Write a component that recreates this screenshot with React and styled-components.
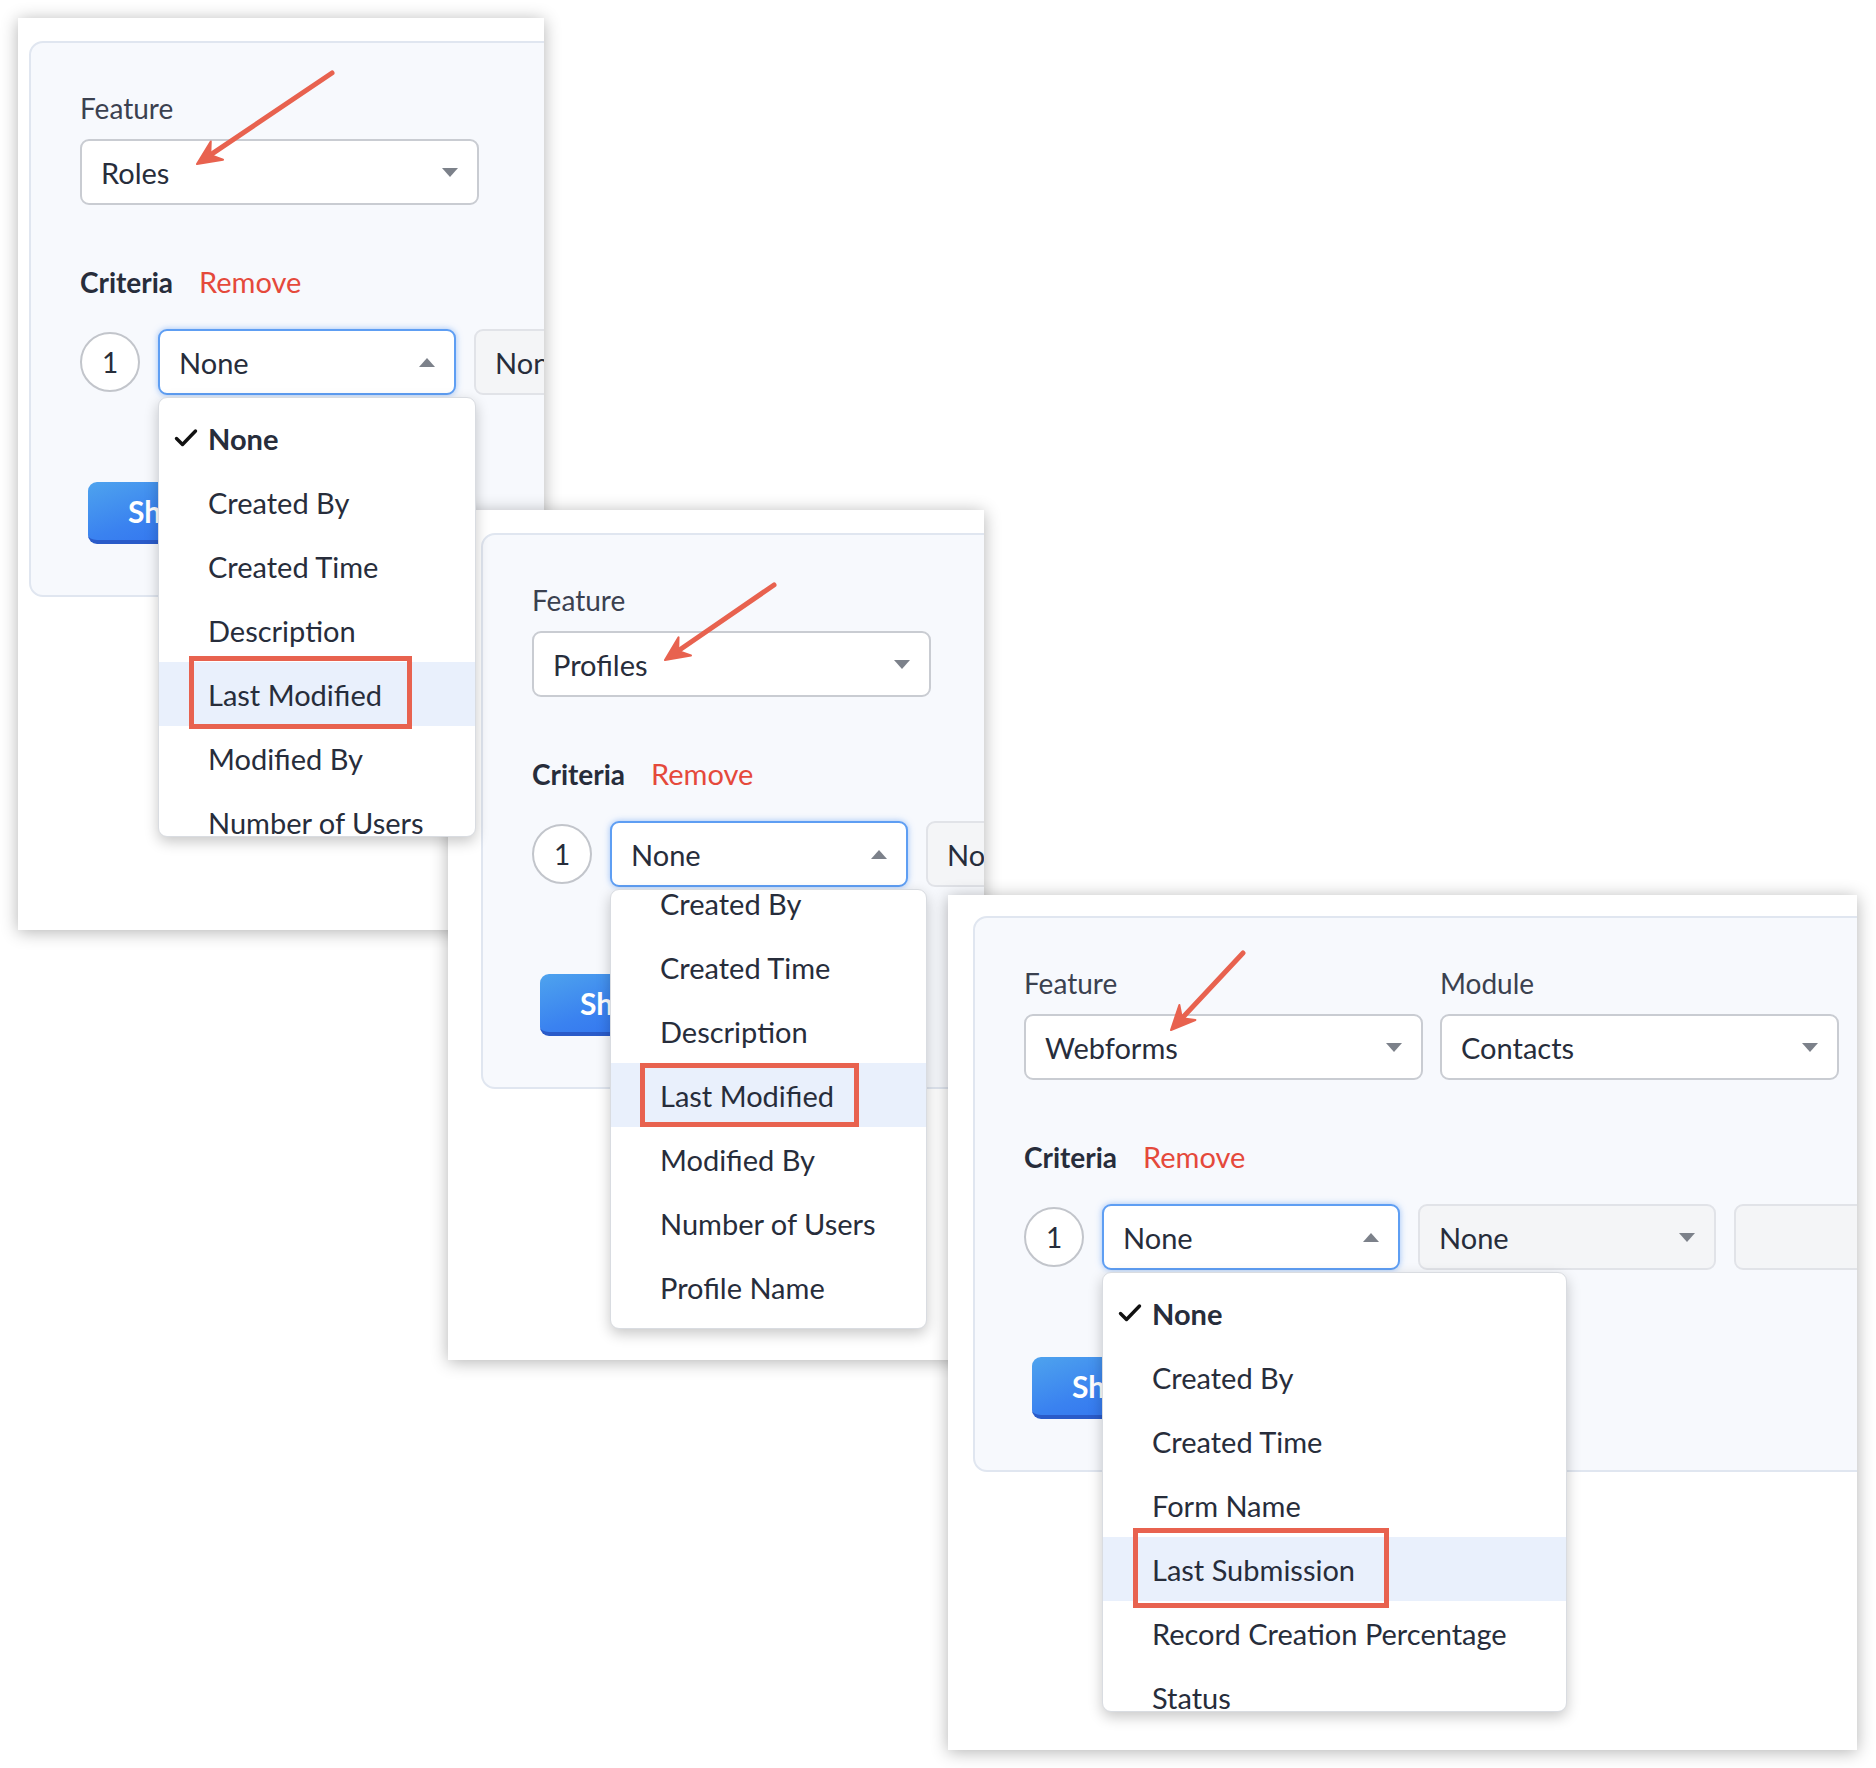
import React from 'react'
import styled, {createGlobalStyle, css} from 'styled-components'

const GlobalStyle = createGlobalStyle`
    html, body {
        margin: 0;
        padding: 0;
        background: #fff;
    }
    body {
        font-family: Lato, "Open Sans", sans-serif;
        color: #262c3a;
    }
`

const ink = '#272d3b'
const coral = '#e8624f'

// the picture is three screenshots stacked on a blank sheet
const Stage = styled.div`
    position: relative;
    width: 1876px;
    height: 1768px;
    overflow: hidden;
    background: #fff;
`

const Shot = styled.section`
    position: absolute;
    left: ${p => p.$x}px;
    top: ${p => p.$y}px;
    width: ${p => p.$w}px;
    height: ${p => p.$h}px;
    padding: ${p => p.$pt}px 0 0 ${p => p.$pl}px;
    box-sizing: border-box;
    background: #fff;
    overflow: hidden;
    box-shadow: 0 2px 16px rgba(0, 0, 0, .3);
`

const Panel = styled.div`
    width: 1100px;
    height: 556px;
    box-sizing: border-box;
    padding: 48px 0 0 49px;
    display: flex;
    flex-direction: column;
    align-items: flex-start;
    background: #f7f9fd;
    border: 2px solid #e0e6f0;
    border-radius: 14px;
`

const Fields = styled.div`
    display: flex;
    gap: 17px;
`

const Field = styled.div`
    display: flex;
    flex-direction: column;
    gap: 14px;
`

const Label = styled.div`
    font-size: 28px;
    line-height: 34px;
    color: #3b4150;
`

const CriteriaHead = styled.div`
    margin-top: 60px;
    display: flex;
    gap: 26px;
    font-size: 28px;
    line-height: 34px;
`

const Heading = styled.span`
    font-weight: 700;
    color: ${ink};
`

const Remove = styled.span`
    color: #e5493b;
    font-size: 29px;
`

const Row = styled.div`
    margin-top: 30px;
    display: flex;
    align-items: center;
    gap: 18px;
`

const Step = styled.div`
    flex: none;
    width: 60px;
    height: 60px;
    box-sizing: border-box;
    display: flex;
    align-items: center;
    justify-content: center;
    border: 2px solid #c2c5cb;
    border-radius: 50%;
    background: #fff;
    font-size: 28px;
    color: ${ink};
`

const SelectWrap = styled.div`
    position: relative;
    flex: none;
`

const Select = styled.div`
    box-sizing: border-box;
    width: ${p => p.$w}px;
    height: 66px;
    display: flex;
    align-items: center;
    justify-content: space-between;
    padding: 0 19px 0 19px;
    border-radius: 9px;
    font-size: 29px;
    color: ${ink};
    background: ${p => p.$muted ? '#f4f5f7' : '#fff'};
    border: 2px solid ${p => p.$focus ? '#5e9ef3' : p.$muted ? '#e1e3e8' : '#c9ccd2'};
    ${p => p.$focus && css`
        box-shadow: 0 0 6px rgba(80, 145, 240, .55);
    `}
`

const Caret = styled.span`
    width: 0;
    height: 0;
    border-left: 8.5px solid transparent;
    border-right: 8.5px solid transparent;
    ${p => p.$up
        ? css`border-bottom: 9px solid #7c818a;`
        : css`border-top: 9px solid #7c818a;`}
`

const Menu = styled.div`
    position: absolute;
    top: calc(100% + 2px);
    left: 0;
    z-index: 5;
    width: ${p => p.$w}px;
    height: 440px;
    box-sizing: border-box;
    overflow: hidden;
    background: #fff;
    border: 1px solid #d9dce1;
    border-radius: 9px;
    box-shadow: 0 5px 14px rgba(0, 0, 0, .22);
`

const MenuList = styled.ul`
    list-style: none;
    margin: ${p => -p.$scroll}px 0 0;
    padding: 8px 0;
`

const Item = styled.li`
    position: relative;
    height: 64px;
    display: flex;
    align-items: center;
    padding-left: 49px;
    font-size: 29px;
    white-space: nowrap;
    color: ${ink};
    font-weight: ${p => p.$checked ? 700 : 400};
    background: ${p => p.$hl ? '#e9f0fc' : 'transparent'};
`

const Tick = styled.svg`
    position: absolute;
    left: 15px;
    top: 22px;
`

// the red frame drawn over the screenshot
const Mark = styled.span`
    position: absolute;
    left: ${p => p.$l}px;
    top: ${p => p.$t}px;
    width: ${p => p.$w}px;
    height: ${p => p.$h}px;
    box-sizing: border-box;
    border: 5.5px solid ${coral};
`

const ShowButton = styled.button`
    margin: 87px 0 0 8px;
    height: 62px;
    padding: 0 44px 0 40px;
    border: none;
    border-bottom: 4px solid #2a5bc9;
    border-radius: 9px;
    background: linear-gradient(160deg, #4ea3ee 0%, #3a82f0 50%, #2f6eee 100%);
    color: #fff;
    font-family: Lato, sans-serif;
    font-size: 30px;
    font-weight: 700;
`

const Overlay = styled.svg`
    position: absolute;
    left: 0;
    top: 0;
    pointer-events: none;
    z-index: 10;
`

const Arrow = ({from, to, w, h}) => {
    const dx = to[0] - from[0]
    const dy = to[1] - from[1]
    const len = Math.hypot(dx, dy)
    const ux = dx / len
    const uy = dy / len
    const px = -uy
    const py = ux
    const back = (d, s) => [to[0] - ux * d + px * s, to[1] - uy * d + py * s]
    const head = [to, back(24, 11), back(16, 0), back(24, -11)]
    const end = back(14, 0)
    return (
        <Overlay width={w} height={h}>
            <line x1={from[0]} y1={from[1]} x2={end[0]} y2={end[1]}
                  stroke={coral} strokeWidth="5" strokeLinecap="round"/>
            <polygon points={head.map(p => p.join(',')).join(' ')}
                     fill={coral} stroke={coral} strokeWidth="2" strokeLinejoin="round"/>
        </Overlay>
    )
}

const CriteriaPicker = ({menuWidth, items, scroll = 0, checked, marked, mark}) => (
    <SelectWrap>
        <Select $w={298} $focus>
            None
            <Caret $up/>
        </Select>
        <Menu $w={menuWidth}>
            <MenuList $scroll={scroll}>
                {items.map(label => (
                    <Item key={label} $checked={label === checked} $hl={label === marked}>
                        {label === checked && (
                            <Tick width="24" height="20" viewBox="0 0 24 20">
                                <path d="M2.5 10.5 L8.5 16.5 L21.5 3" fill="none"
                                      stroke="#111" strokeWidth="3.4" strokeLinecap="round"
                                      strokeLinejoin="round"/>
                            </Tick>
                        )}
                        {label}
                        {label === marked && <Mark $l={mark[0]} $t={mark[1]} $w={mark[2]} $h={mark[3]}/>}
                    </Item>
                ))}
            </MenuList>
        </Menu>
    </SelectWrap>
)

const Screen = ({shot, fields, extra, picker, arrow}) => (
    <Shot $x={shot.x} $y={shot.y} $w={shot.w} $h={shot.h} $pl={shot.pl} $pt={shot.pt}>
        <Panel>
            <Fields>
                {fields.map(f => (
                    <Field key={f.label}>
                        <Label>{f.label}</Label>
                        <Select $w={399}>
                            {f.value}
                            <Caret/>
                        </Select>
                    </Field>
                ))}
            </Fields>
            <CriteriaHead>
                <Heading>Criteria</Heading>
                <Remove>Remove</Remove>
            </CriteriaHead>
            <Row>
                <Step>1</Step>
                <CriteriaPicker {...picker}/>
                <Select $w={298} $muted>
                    None
                    <Caret/>
                </Select>
                {extra && <Select $w={298} $muted/>}
            </Row>
            <ShowButton>Show</ShowButton>
        </Panel>
        <Arrow from={arrow.from} to={arrow.to} w={shot.w} h={shot.h}/>
    </Shot>
)

const roleItems = ['None', 'Created By', 'Created Time', 'Description', 'Last Modified',
    'Modified By', 'Number of Users']

const profileItems = ['None', 'Created By', 'Created Time', 'Description', 'Last Modified',
    'Modified By', 'Number of Users', 'Profile Name']

const webformItems = ['None', 'Created By', 'Created Time', 'Form Name', 'Last Submission',
    'Record Creation Percentage', 'Status']

const App = () => (
    <Stage>
        <GlobalStyle/>
        <Screen
            shot={{x: 18, y: 18, w: 526, h: 912, pl: 11, pt: 23}}
            fields={[{label: 'Feature', value: 'Roles'}]}
            picker={{menuWidth: 318, items: roleItems, checked: 'None',
                marked: 'Last Modified', mark: [30, -6, 223, 73]}}
            arrow={{from: [314, 55], to: [179, 146]}}
        />
        <Screen
            shot={{x: 448, y: 510, w: 536, h: 850, pl: 33, pt: 23}}
            fields={[{label: 'Feature', value: 'Profiles'}]}
            picker={{menuWidth: 317, items: profileItems, scroll: 91, checked: 'None',
                marked: 'Last Modified', mark: [29, 0, 219, 64]}}
            arrow={{from: [326, 75], to: [217, 150]}}
        />
        <Screen
            shot={{x: 948, y: 895, w: 909, h: 855, pl: 25, pt: 21}}
            fields={[{label: 'Feature', value: 'Webforms'}, {label: 'Module', value: 'Contacts'}]}
            extra
            picker={{menuWidth: 465, items: webformItems, checked: 'None',
                marked: 'Last Submission', mark: [30, -9, 256, 80]}}
            arrow={{from: [295, 58], to: [223, 135]}}
        />
    </Stage>
)

export default App
